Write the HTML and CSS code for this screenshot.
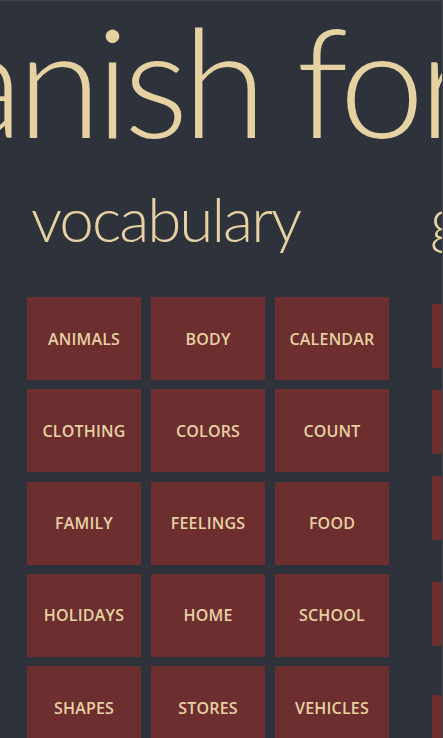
FILE: index.html
```html
<!DOCTYPE html>
<html lang="en">
<head>
<meta charset="utf-8">
<title>Spanish for Kids</title>
<link rel="stylesheet" href="styles.css">
</head>
<body>
<div class="app">
  <h1 class="title">Spanish for kids</h1>
  <div class="hub">
    <section class="section vocab">
      <h2 class="section-title">vocabulary</h2>
      <div class="tiles">
        <a class="tile">ANIMALS</a>
        <a class="tile">BODY</a>
        <a class="tile">CALENDAR</a>
        <a class="tile">CLOTHING</a>
        <a class="tile">COLORS</a>
        <a class="tile">COUNT</a>
        <a class="tile">FAMILY</a>
        <a class="tile">FEELINGS</a>
        <a class="tile">FOOD</a>
        <a class="tile">HOLIDAYS</a>
        <a class="tile">HOME</a>
        <a class="tile">SCHOOL</a>
        <a class="tile">SHAPES</a>
        <a class="tile">STORES</a>
        <a class="tile">VEHICLES</a>
      </div>
    </section>
    <section class="section grammar">
      <h2 class="section-title">grammar</h2>
      <div class="list">
        <a class="item item-1">ARTICLES</a>
        <a class="item item-2">NOUNS</a>
        <a class="item item-3">VERBS</a>
        <a class="item item-4">ADJECTIVES</a>
        <a class="item item-5">PHRASES</a>
      </div>
    </section>
  </div>
</div>
</body>
</html>
```
FILE: styles.css
```css
html, body {
  margin: 0;
  padding: 0;
  width: 443px;
  height: 738px;
  overflow: hidden;
  background: #2e323a;
}
.app {
  box-sizing: border-box;
  width: 443px;
  height: 738px;
  overflow: hidden;
  border-top: 1px solid #3e424a;
  border-right: 1px solid #3e424a;
  color: #e6d1a3;
  font-family: "Open Sans", "Noto Sans", sans-serif;
}
.title {
  margin: 0 0 0 -203px;
  font-family: "Lato", "Open Sans", sans-serif;
  font-weight: 300;
  font-size: 153px;
  line-height: 156px;
  height: 180px;
  white-space: nowrap;
  letter-spacing: -6px;
}
.hub {
  display: flex;
  align-items: flex-start;
  gap: 43px;
  padding-left: 27px;
}
.section {
  flex: none;
  display: flex;
  flex-direction: column;
}
.section-title {
  margin: 0 0 0 4px;
  font-family: "Lato", "Open Sans", sans-serif;
  font-weight: 300;
  font-size: 62px;
  line-height: 74px;
  height: 116px;
  white-space: nowrap;
  letter-spacing: -2px;
}
.grammar .section-title {
  margin-left: -2px;
}
.tiles {
  display: grid;
  grid-template-columns: repeat(3, 114px);
  grid-auto-rows: 83px;
  column-gap: 10px;
  row-gap: 9.3px;
}
.tile, .item {
  display: flex;
  align-items: center;
  justify-content: center;
  background: #6d2e2f;
  color: #e6d1a3;
  font-weight: 600;
  font-size: 16px;
  letter-spacing: 0.2px;
}
.list {
  display: flex;
  flex-direction: column;
  padding-top: 7px;
}
.item {
  width: 160px;
  height: 64px;
}
.item-2 { margin-top: 22px; }
.item-3 { margin-top: 22px; }
.item-4 { margin-top: 42px; }
.item-5 { margin-top: 49px; }
```
